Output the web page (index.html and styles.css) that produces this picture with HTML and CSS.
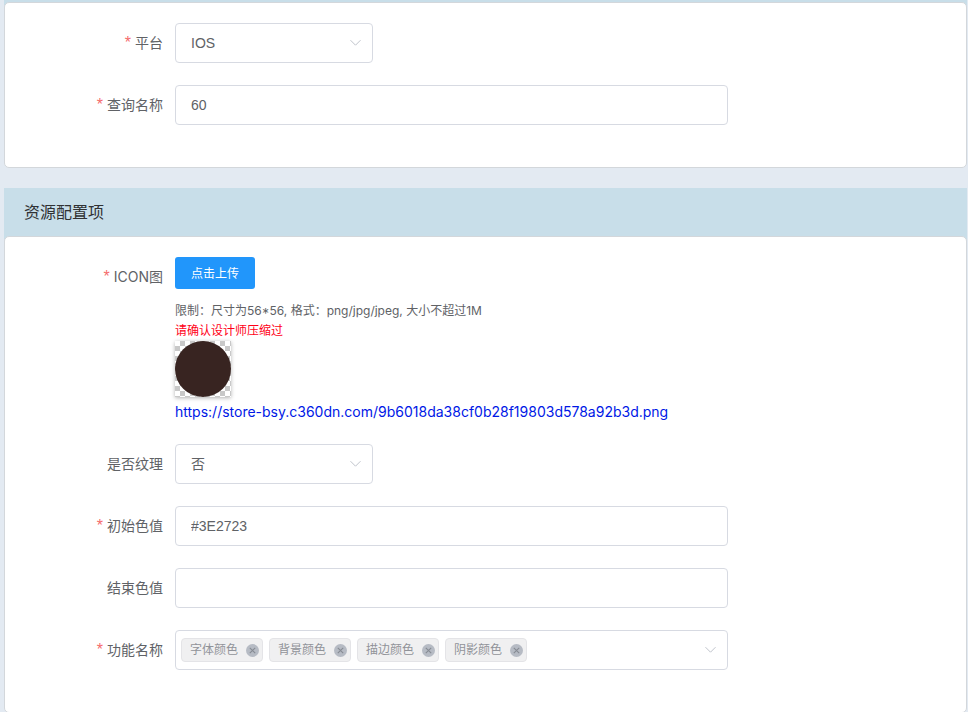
FILE: index.html
```html
<!DOCTYPE html>
<html lang="zh-CN">
<head>
<meta charset="utf-8">
<meta name="viewport" content="width=device-width, initial-scale=1">
<title>资源配置项</title>
<link rel="stylesheet" href="styles.css">
</head>
<body>
<form class="page">
  <section class="section">
    <div class="section-edge"></div>
    <div class="card">
      <div class="item">
        <label class="label required" for="platform">平台</label>
        <div class="content">
          <div class="select short">
            <select id="platform" class="control"><option>IOS</option></select>
            <svg class="arrow" viewBox="0 0 14 14" aria-hidden="true"><path d="M1.500 4.200 6.500 9.200l5-5"/></svg>
          </div>
        </div>
      </div>
      <div class="item">
        <label class="label required" for="query">查询名称</label>
        <div class="content"><input id="query" class="control" type="text" value="60"></div>
      </div>
    </div>
  </section>

  <section class="section">
    <h2 class="section-title">资源配置项</h2>
    <div class="card">
      <div class="item">
        <label class="label required" for="upload">ICON图</label>
        <div class="content">
          <button id="upload" class="upload" type="button">点击上传</button>
          <div class="tip">限制：尺寸为56*56, 格式：png/jpg/jpeg, 大小不超过1M</div>
          <div class="tip warn">请确认设计师压缩过</div>
          <div class="preview"><div class="swatch"></div></div>
          <a class="link" href="#">https://store-bsy.c360dn.com/9b6018da38cf0b28f19803d578a92b3d.png</a>
        </div>
      </div>
      <div class="item">
        <label class="label" for="texture">是否纹理</label>
        <div class="content">
          <div class="select short">
            <select id="texture" class="control"><option>否</option></select>
            <svg class="arrow" viewBox="0 0 14 14" aria-hidden="true"><path d="M1.500 4.200 6.500 9.200l5-5"/></svg>
          </div>
        </div>
      </div>
      <div class="item">
        <label class="label required" for="start">初始色值</label>
        <div class="content"><input id="start" class="control" type="text" value="#3E2723"></div>
      </div>
      <div class="item">
        <label class="label" for="end">结束色值</label>
        <div class="content"><input id="end" class="control" type="text"></div>
      </div>
      <div class="item">
        <label class="label required" for="features">功能名称</label>
        <div class="content">
          <div class="select control tags">
            <span class="tag">字体颜色<button class="close" type="button" aria-label="移除"><svg viewBox="0 0 12 12"><path d="m3.500 3.500 5 5m0-5-5 5"/></svg></button></span>
            <span class="tag">背景颜色<button class="close" type="button" aria-label="移除"><svg viewBox="0 0 12 12"><path d="m3.500 3.500 5 5m0-5-5 5"/></svg></button></span>
            <span class="tag">描边颜色<button class="close" type="button" aria-label="移除"><svg viewBox="0 0 12 12"><path d="m3.500 3.500 5 5m0-5-5 5"/></svg></button></span>
            <span class="tag">阴影颜色<button class="close" type="button" aria-label="移除"><svg viewBox="0 0 12 12"><path d="m3.500 3.500 5 5m0-5-5 5"/></svg></button></span>
            <input id="features" class="tag-input" type="text">
            <svg class="arrow" viewBox="0 0 14 14" aria-hidden="true"><path d="M1.500 4.200 6.500 9.200l5-5"/></svg>
          </div>
        </div>
      </div>
    </div>
  </section>
</form>
</body>
</html>
```
FILE: styles.css
```css
* {
  box-sizing: border-box;
}

html {
  scrollbar-width: none;
}

body {
  margin: 0;
  background: #e3eaf2;
  color: #606266;
  font-family: Inter, "Noto Sans CJK SC", sans-serif;
  font-size: 14px;
}

.page {
  display: flex;
  flex-direction: column;
  gap: 20px;
  padding: 0 1px 0 4px;
}

.section:first-child {
  background: linear-gradient(#c8dee9 8px, transparent 8px);
}

.section:last-child {
  background: linear-gradient(#c8dee9 56px, transparent 56px);
}

.section-edge {
  height: 2px;
}

.section-title {
  margin: 0;
  padding: 0 20px;
  color: #303133;
  font-size: 16px;
  font-weight: 400;
  line-height: 48px;
}

.card {
  padding: 20px;
  background: #fff;
  border: 1px solid #d3d7db;
  border-radius: 5px;
}

.item {
  display: flex;
  margin-bottom: 22px;
}

.label {
  flex: 0 0 150px;
  padding-right: 12px;
  line-height: 40px;
  text-align: right;
}

.required::before {
  content: "*";
  margin-right: 4px;
  color: #f56c6c;
  font-family: "Liberation Sans", sans-serif;
  font-size: 16px;
  line-height: 20px;
}

.content {
  flex: 1;
  max-width: 553px;
}

.control {
  display: block;
  width: 100%;
  height: 40px;
  padding: 0 15px;
  color: #606266;
  background: #fff;
  border: 1px solid #d7dae2;
  border-radius: 4px;
  font-family: "Liberation Sans", "Noto Sans CJK SC", sans-serif;
  font-size: 14px;
  appearance: none;
}

.select {
  position: relative;
}

.short {
  width: 198px;
}

.arrow {
  position: absolute;
  top: 13px;
  right: 10px;
  width: 14px;
  height: 14px;
  fill: none;
  stroke: #c0c4cc;
  pointer-events: none;
}

.upload {
  display: block;
  height: 32px;
  margin-bottom: 12px;
  padding: 0 16px 2px;
  color: #fff;
  background: #2196fb;
  border: 0;
  border-radius: 3px;
  font: inherit;
  font-size: 12px;
}

.tip {
  font-size: 12px;
  line-height: 20px;
}

.warn {
  color: #ff0018;
}

.preview {
  width: 56px;
  height: 56px;
  background: repeating-conic-gradient(#c8c8c8 0 25%, #fff 0 50%) 0 0 / 10px 10px;
  box-shadow: 0 1px 4px rgba(0, 0, 0, 0.3);
}

.swatch {
  height: 100%;
  background: #382421;
  border-radius: 50%;
}

.link {
  display: block;
  padding-top: 5px;
  color: #0018e6;
  line-height: 20px;
  text-decoration: none;
}

.tags {
  display: flex;
  align-items: center;
  gap: 6px;
  padding: 0 30px 0 5px;
}

.tag {
  display: flex;
  align-items: center;
  gap: 8px;
  height: 24px;
  padding: 0 3px 0 8px;
  color: #909399;
  background: #f0f0f1;
  border: 1px solid #e4e4e7;
  border-radius: 4px;
  font-family: Inter, "Noto Sans CJK SC", sans-serif;
  font-size: 12px;
  line-height: 20px;
  white-space: nowrap;
}

.close {
  width: 13px;
  height: 13px;
  padding: 0;
  background: #b6bbc4;
  border: 0;
  border-radius: 50%;
}

.close svg {
  display: block;
  fill: none;
  stroke: #868b93;
}

.tag-input {
  flex: 1;
  min-width: 0;
  border: 0;
  outline: 0;
}

.tags .arrow {
  top: 12px;
  right: 9px;
}
```
